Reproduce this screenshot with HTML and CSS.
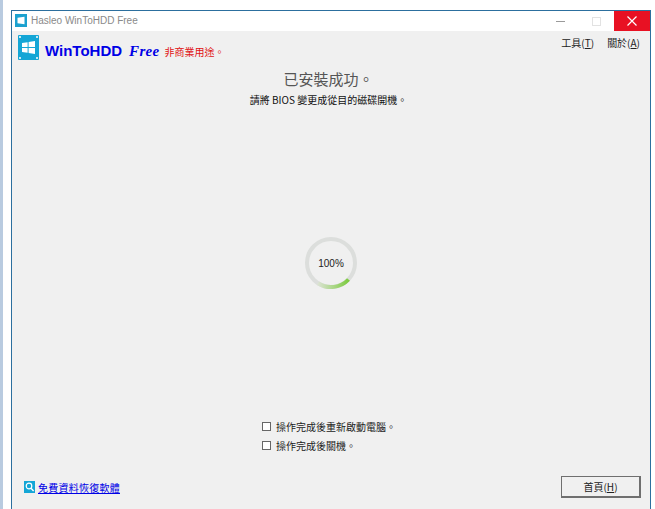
FILE: index.html
```html
<!DOCTYPE html>
<html lang="zh-Hant">
<head>
  <meta charset="UTF-8">
  <title>Hasleo WinToHDD Free</title>
  <link rel="stylesheet" href="styles.css">
</head>
<body>
  <div class="desktop-edge"></div>
  <div class="window">
    <div class="titlebar">
      <svg class="title-icon" width="12" height="13" viewBox="0 0 12 13">
        <rect width="12" height="13" fill="#1ba1cf"/>
        <path d="M2.5 3.8 L9.5 2.8 V10.2 L2.5 9.2 Z" fill="#fff"/>
      </svg>
      <span class="title-text">Hasleo WinToHDD Free</span>
      <div class="win-buttons">
        <div class="win-btn"><span class="min-line"></span></div>
        <div class="win-btn"><span class="max-box"></span></div>
        <div class="win-btn close">
          <svg width="10" height="10" viewBox="0 0 10 10"><path d="M0.5 0.5 L9.5 9.5 M9.5 0.5 L0.5 9.5" stroke="#fff" stroke-width="1.2"/></svg>
        </div>
      </div>
    </div>

    <div class="content">
      <div class="header">
        <div class="brand">
          <svg class="logo" width="21" height="25" viewBox="0 0 21 25">
            <rect width="21" height="25" rx="1" fill="#14a6d6"/>
            <path d="M4 8 L9.6 7.2 V12 H4 Z M10.6 7 L17 6 V12 H10.6 Z M4 13 H9.6 V17.8 L4 17 Z M10.6 13 H17 V19 L10.6 18 Z" fill="#fff"/>
            <circle cx="2" cy="2" r="1" fill="#fff"/><circle cx="19" cy="2" r="1" fill="#fff"/>
            <circle cx="2" cy="23" r="1" fill="#fff"/><circle cx="19" cy="23" r="1" fill="#fff"/>
          </svg>
          <span class="brand-name">WinToHDD</span>
          <span class="brand-free">Free</span>
          <span class="brand-note">非商業用途。</span>
        </div>
        <div class="menu">
          <span>工具(<u>T</u>)</span>
          <span>關於(<u>A</u>)</span>
        </div>
      </div>

      <div class="status">
        <h1>已安裝成功。</h1>
        <p>請將 BIOS 變更成從目的磁碟開機。</p>
      </div>

      <div class="progress-area">
        <div class="ring">
          <svg width="54" height="54" viewBox="0 0 54 54">
            <defs>
              <linearGradient id="arcFade" x1="1" y1="0" x2="0" y2="0">
                <stop offset="0" stop-color="#7ccb3f"/>
                <stop offset="1" stop-color="#dbe3d2"/>
              </linearGradient>
            </defs>
            <circle cx="27" cy="27" r="24" fill="none" stroke="#dcdedc" stroke-width="4"/>
            <path d="M44.5 43.5 A24 24 0 0 1 14 47.2" fill="none" stroke="url(#arcFade)" stroke-width="4"/>
          </svg>
          <span class="ring-label">100%</span>
        </div>
      </div>

      <div class="options">
        <label class="option"><span class="check"></span>操作完成後重新啟動電腦。</label>
        <label class="option"><span class="check"></span>操作完成後關機。</label>
      </div>

      <div class="footer">
        <a class="recover-link" href="#">
          <svg width="11" height="12" viewBox="0 0 11 12">
            <rect width="11" height="12" fill="#14a6d6"/>
            <circle cx="5" cy="5" r="2.8" fill="none" stroke="#fff" stroke-width="1.2"/>
            <path d="M7 7.2 L9.6 10" stroke="#fff" stroke-width="1.4"/>
          </svg>
          <span>免費資料恢復軟體</span>
        </a>
        <button class="home-btn">首頁(<u>H</u>)</button>
      </div>
    </div>
  </div>
</body>
</html>
```

FILE: styles.css
```css
* {
  box-sizing: border-box;
  margin: 0;
  padding: 0;
}

html, body {
  height: 100%;
  overflow: hidden;
}

body {
  display: flex;
  background: #fff;
  font-family: "Noto Sans CJK TC", "Liberation Sans", sans-serif;
  font-size: 10px;
  color: #222;
}

.desktop-edge {
  width: 3px;
  background: #b9cbe0;
  margin-right: 8px;
}

.window {
  width: 640px;
  margin-top: 10px;
  display: flex;
  flex-direction: column;
  border: 1px solid #2c6f9e;
  border-bottom: none;
}

/* title bar */
.titlebar {
  height: 20px;
  display: flex;
  align-items: center;
  background: #fff;
  padding-left: 3px;
}

.title-icon {
  margin-right: 4px;
  margin-bottom: 2px;
}

.title-text {
  font-family: "Liberation Sans", sans-serif;
  font-size: 10px;
  color: #8a8a8a;
  margin-bottom: 2px;
}

.win-buttons {
  margin-left: auto;
  display: flex;
  height: 100%;
}

.win-btn {
  width: 36px;
  display: flex;
  align-items: center;
  justify-content: center;
}

.min-line {
  width: 9px;
  height: 1px;
  background: #9a9a9a;
}

.max-box {
  width: 9px;
  height: 9px;
  border: 1px solid #e2e2e2;
}

.win-btn.close {
  background: #e81123;
}

/* main area */
.content {
  flex: 1;
  display: flex;
  flex-direction: column;
  background: #f0f0f0;
}

.header {
  display: flex;
  justify-content: space-between;
  padding: 3px 10px 0 6px;
}

.brand {
  display: flex;
  align-items: center;
  height: 26px;
}

.logo {
  margin-right: 6px;
}

.brand-name {
  font-family: "Liberation Sans", sans-serif;
  font-weight: bold;
  font-size: 15px;
  color: #0000e6;
  margin: 6px 7px 0 0;
}

.brand-free {
  font-family: "Liberation Serif", serif;
  font-weight: bold;
  font-style: italic;
  font-size: 15px;
  color: #0000e6;
  letter-spacing: 0.3px;
  margin: 9px 5px 0 0;
}

.brand-note {
  font-size: 10px;
  color: #e01010;
  margin-top: 8px;
}

.menu {
  display: flex;
  gap: 13px;
  font-size: 10px;
  line-height: 14px;
  padding-top: 2px;
}

.status {
  margin-top: 9px;
  padding-right: 5px;
  text-align: center;
}

.status h1 {
  font-size: 15px;
  line-height: 20px;
  font-weight: 400;
  color: #555;
}

.status p {
  font-size: 10px;
  line-height: 14px;
  margin-top: 4px;
  color: #111;
}

.progress-area {
  height: 128px;
  margin-top: 119px;
  display: flex;
  justify-content: center;
  align-items: flex-start;
  padding-top: 10px;
}

.ring {
  position: relative;
  width: 54px;
  height: 54px;
}

.ring-label {
  position: absolute;
  inset: 0;
  display: flex;
  align-items: center;
  justify-content: center;
  font-family: "Liberation Sans", sans-serif;
  font-size: 10px;
  color: #222;
}

.options {
  margin-top: 65px;
  margin-left: 250px;
  display: flex;
  flex-direction: column;
  gap: 5px;
}

.option {
  display: flex;
  align-items: center;
  height: 14px;
  font-size: 10px;
  color: #222;
}

.check {
  width: 9px;
  height: 9px;
  border: 1px solid #666;
  background: #fff;
  margin-right: 5px;
}

.footer {
  margin-top: auto;
  display: flex;
  justify-content: space-between;
  align-items: center;
  padding: 0 9px 11px 12px;
}

.recover-link {
  display: flex;
  align-items: center;
  gap: 3px;
  font-size: 10px;
  letter-spacing: 0.25px;
  color: #0000e6;
}

.home-btn {
  width: 80px;
  height: 22px;
  font-family: inherit;
  font-size: 10px;
  color: #222;
  background: #f0f0f0;
  border: 1px solid #6f6f6f;
  border-right-width: 2px;
  border-bottom-width: 2px;
}
```
